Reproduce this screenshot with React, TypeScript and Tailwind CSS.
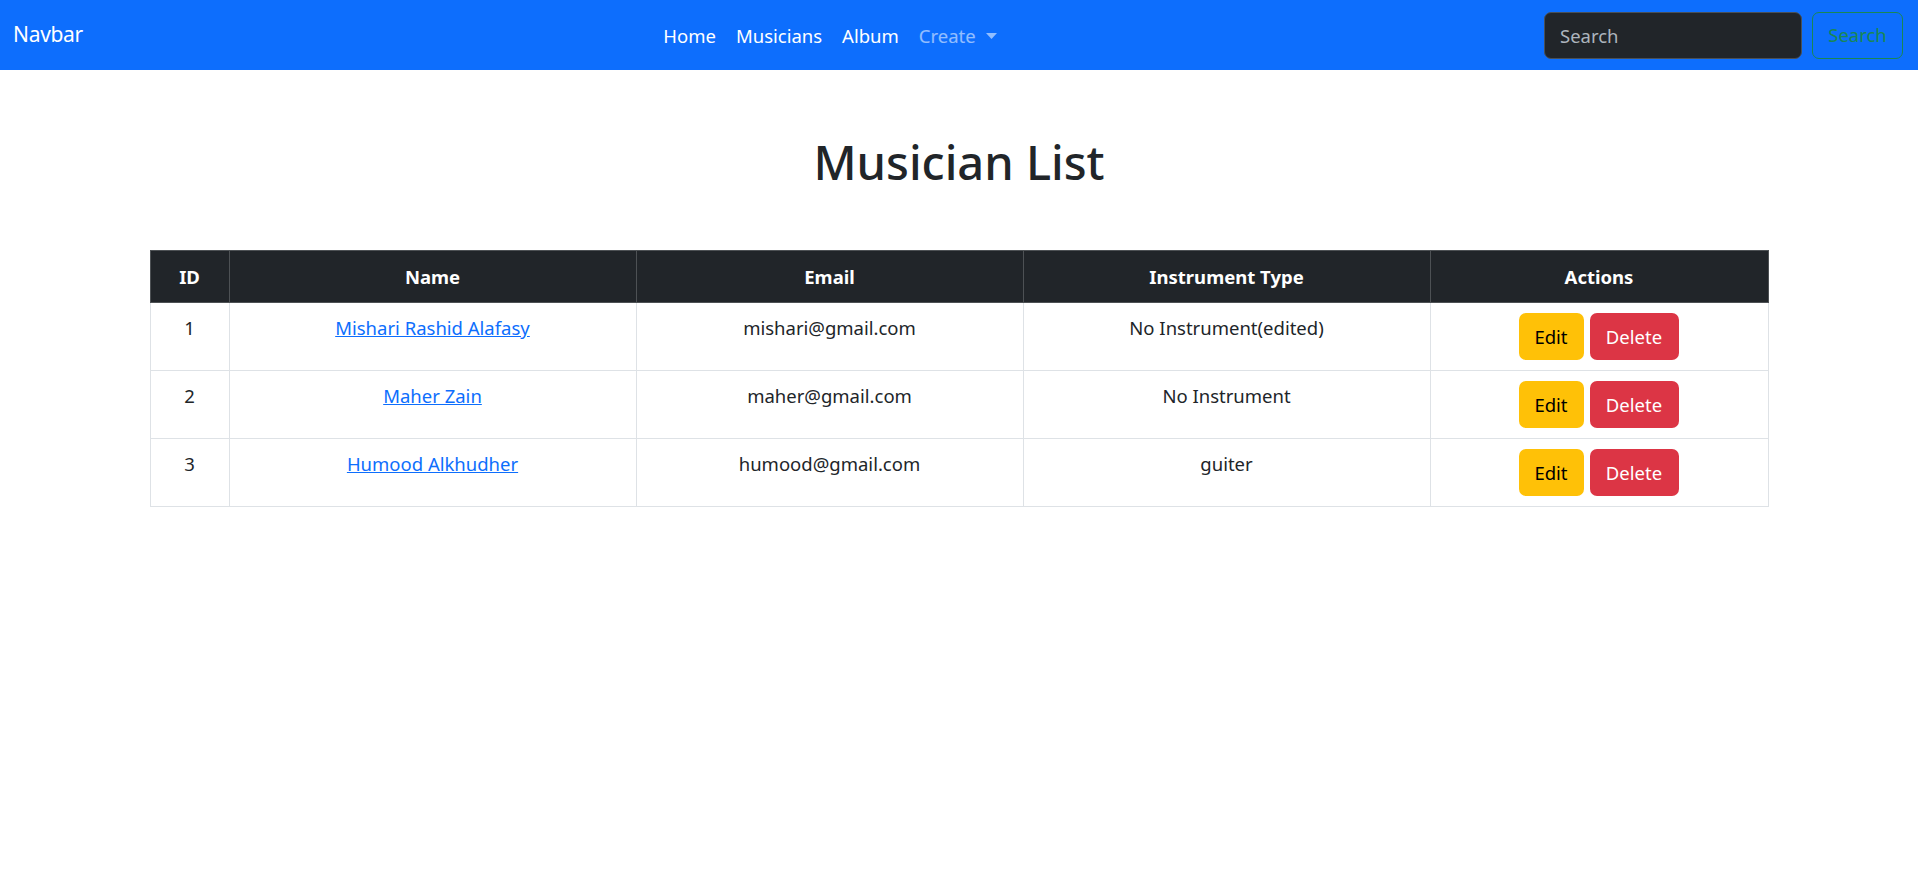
const musicians = [
  { id: 1, name: "Mishari Rashid Alafasy", email: "mishari@gmail.com", instrument: "No Instrument(edited)" },
  { id: 2, name: "Maher Zain", email: "maher@gmail.com", instrument: "No Instrument" },
  { id: 3, name: "Humood Alkhudher", email: "humood@gmail.com", instrument: "guiter" },
];

const font = { fontFamily: '"Noto Sans", "Open Sans", sans-serif' };

function Navbar() {
  return (
    <nav className="h-[70px] bg-[#0d6efd] flex items-center px-[13px] pr-[15px]">
      <span className="text-[21px] tracking-[-0.3px] text-white w-[250px]">Navbar</span>
      <div className="flex-1 flex justify-center items-center pr-[147px] pt-[1px]">
        <a className="px-[10px] text-[18.5px] text-white">Home</a>
        <a className="px-[10px] text-[18.5px] text-white">Musicians</a>
        <a className="px-[10px] text-[18.5px] text-white">Album</a>
        <a className="px-[10px] text-[18.5px] text-white/55 flex items-center">
          Create
          <svg className="ml-[10px] w-[11px] h-[6px]" viewBox="0 0 11 6">
            <path d="M0 0h11L5.5 6z" fill="currentColor" />
          </svg>
        </a>
      </div>
      <form className="flex items-center gap-[10px]">
        <input
          placeholder="Search"
          className="w-[258px] h-[47px] rounded-[7px] bg-[#212529] border border-[#495057] px-[15px] text-[18.5px] text-white placeholder:text-[#adb5bd] outline-none"
        />
        <button type="button" className="w-[91px] h-[47px] rounded-[7px] border border-[#198754] text-[#198754] text-[18.5px]">
          Search
        </button>
      </form>
    </nav>
  );
}

export default function App() {
  return (
    <div className="min-h-[870px] bg-white text-[#212529]" style={font}>
      <Navbar />
      <div className="w-[1619px] mx-auto">
        <h1 className="text-center text-[47px] font-medium leading-[1.2] mt-[64px] mb-[60px]">Musician List</h1>
        <table className="w-full table-fixed border-collapse text-[18.5px] leading-[30px]">
          <thead>
            <tr className="bg-[#212529] text-white">
              <th className="w-[79px] h-[52px] border border-[#4d5154] font-bold">ID</th>
              <th className="w-[407px] border border-[#4d5154] font-bold">Name</th>
              <th className="w-[387px] border border-[#4d5154] font-bold">Email</th>
              <th className="w-[407px] border border-[#4d5154] font-bold">Instrument Type</th>
              <th className="border border-[#4d5154] font-bold">Actions</th>
            </tr>
          </thead>
          <tbody>
            {musicians.map((m) => (
              <tr key={m.id}>
                <td className="border border-[#dee2e6] text-center align-top py-[10px]">{m.id}</td>
                <td className="border border-[#dee2e6] text-center align-top py-[10px]">
                  <a className="text-[#0d6efd] underline">{m.name}</a>
                </td>
                <td className="border border-[#dee2e6] text-center align-top py-[10px]">{m.email}</td>
                <td className="border border-[#dee2e6] text-center align-top py-[10px]">{m.instrument}</td>
                <td className="border border-[#dee2e6] text-center align-top py-[10px]">
                  <div className="flex justify-center gap-[6px] pr-[1px]">
                    <button className="w-[65px] h-[47px] rounded-[7px] bg-[#ffc107] text-black">Edit</button>
                    <button className="w-[89px] h-[47px] rounded-[7px] bg-[#dc3545] text-white">Delete</button>
                  </div>
                </td>
              </tr>
            ))}
          </tbody>
        </table>
      </div>
    </div>
  );
}
